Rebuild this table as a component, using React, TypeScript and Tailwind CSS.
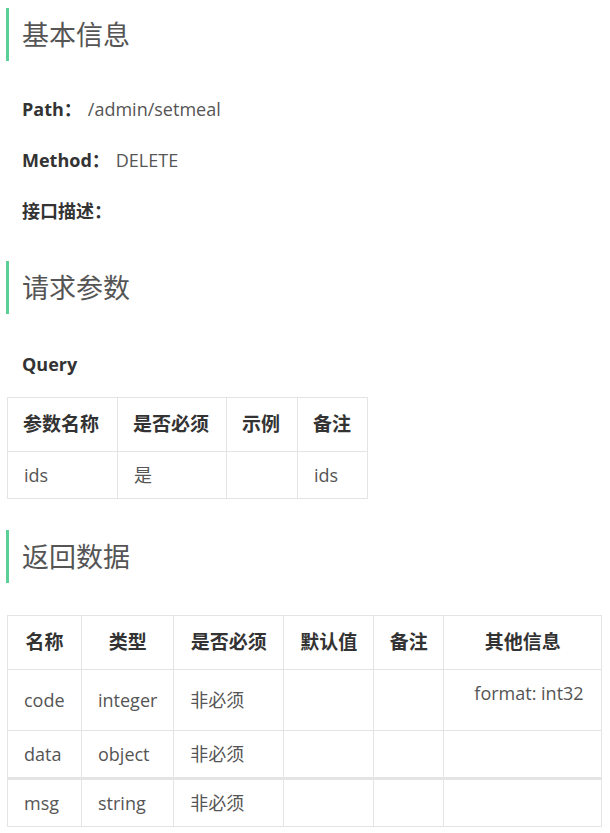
const font = { fontFamily: '"Open Sans", "Noto Sans CJK SC", sans-serif' }

function Heading({ title }: { title: string }) {
  return (
    <div className="ml-[6px] flex h-[53px] items-center border-l-[3px] border-[#5ad097] pl-[13px]">
      <span className="text-[27px] leading-none text-[#555]">{title}</span>
    </div>
  )
}

function Label({ name, value }: { name: string; value?: string }) {
  return (
    <div className="flex h-[51px] items-center pl-[22px] text-[18px]">
      <span className="font-bold text-[#333]">{name}</span>
      {value && <span className="ml-[6px] text-[#555]">{value}</span>}
    </div>
  )
}

const queryCols = ['参数名称', '是否必须', '示例', '备注']
const queryWidths = ['w-[110px]', 'w-[109px]', 'w-[71px]', 'w-[70px]']

const resCols = ['名称', '类型', '是否必须', '默认值', '备注', '其他信息']
const resWidths = ['w-[74px]', 'w-[92px]', 'w-[110px]', 'w-[90px]', 'w-[70px]', 'w-[158px]']
const resRows = [
  { name: 'code', type: 'integer', required: '非必须', other: 'format: int32' },
  { name: 'data', type: 'object', required: '非必须', other: '' },
  { name: 'msg', type: 'string', required: '非必须', other: '' },
]

const cell = 'border-[1.5px] border-[#e4e4e4] px-[16px] text-[18px] text-[#555] whitespace-nowrap'
const head = 'border-[1.5px] border-[#e4e4e4] px-[15px] text-[19px] font-bold text-[#333] whitespace-nowrap'

export default function App() {
  return (
    <div className="w-[610px] bg-white pt-[8px]" style={font}>
      <Heading title="基本信息" />
      <div className="mt-[23px]">
        <Label name="Path：" value="/admin/setmeal" />
        <Label name="Method：" value="DELETE" />
        <Label name="接口描述：" />
      </div>

      <div className="mt-[24px]">
        <Heading title="请求参数" />
      </div>
      <div className="mt-[25px] flex h-[50px] items-center pl-[22px] text-[18px] font-bold text-[#333]">
        Query
      </div>
      <table className="ml-[7px] mt-[8px] border-collapse">
        <thead>
          <tr className="h-[54px]">
            {queryCols.map((c, i) => (
              <th key={c} className={`${head} ${queryWidths[i]} text-left`}>
                {c}
              </th>
            ))}
          </tr>
        </thead>
        <tbody>
          <tr className="h-[47px]">
            <td className={cell}>ids</td>
            <td className={cell}>是</td>
            <td className={cell}></td>
            <td className={cell}>ids</td>
          </tr>
        </tbody>
      </table>

      <div className="mt-[31px]">
        <Heading title="返回数据" />
      </div>
      <table className="ml-[7px] mt-[32px] border-collapse">
        <thead>
          <tr className="h-[54px]">
            {resCols.map((c, i) => (
              <th key={c} className={`${head} ${resWidths[i]} text-center`}>
                {c}
              </th>
            ))}
          </tr>
        </thead>
        <tbody>
          {resRows.map((r, i) => {
            // last row sits under a doubled rule
            const top = i === 2 ? 'border-t-[3px]' : ''
            return (
              <tr key={r.name} className={i === 0 ? 'h-[61px]' : 'h-[48px]'}>
                <td className={`${cell} ${top}`}>{r.name}</td>
                <td className={`${cell} ${top}`}>{r.type}</td>
                <td className={`${cell} ${top}`}>{r.required}</td>
                <td className={`${cell} ${top}`}></td>
                <td className={`${cell} ${top}`}></td>
                <td className={`${cell} ${top} pl-[30px] text-left align-top`}>
                  {r.other && <div className="pt-[10px]">{r.other}</div>}
                </td>
              </tr>
            )
          })}
        </tbody>
      </table>
    </div>
  )
}
